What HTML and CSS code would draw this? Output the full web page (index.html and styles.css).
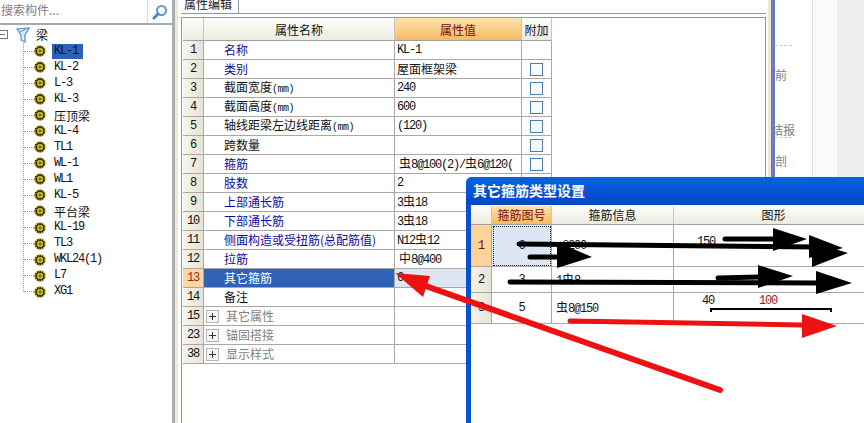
FILE: index.html
```html
<!DOCTYPE html>
<html lang="zh-CN">
<head>
  <meta charset="UTF-8" />
  <title>属性编辑</title>
  <link rel="stylesheet" href="styles.css">
</head>
<body>

<svg class="defs" width="0" height="0">
  <symbol id="gear" viewBox="0 0 12 12">
    <circle cx="6" cy="6" r="5.6" fill="#3d3a10"/>
    <circle cx="6" cy="6" r="5.3" fill="none" stroke="#f2ea4a" stroke-width="1.2" stroke-dasharray="1.4 1.4"/>
    <circle cx="6" cy="6" r="3" fill="#e8de3c"/>
    <path d="M6 3.5 V8.5 M3.5 6 H8.5" stroke="#55510f" stroke-width="1"/>
  </symbol>
</svg>

<div class="app">
  <!-- left: component tree -->
  <div class="side">
    <div class="search">
      <div class="search-box">搜索构件...</div>
      <div class="search-btn">
        <svg width="16" height="16" viewBox="0 0 16 16">
          <circle cx="9.5" cy="6.5" r="4.5" fill="#fff" stroke="#5b9bd0" stroke-width="2"/>
          <path d="M6 10 L2 14" stroke="#4a86bd" stroke-width="3" stroke-linecap="round"/>
        </svg>
      </div>
    </div>
    <div class="tree-root">
      <span class="minus"></span>
      <svg class="funnel" width="14" height="16" viewBox="0 0 14 16">
        <path d="M1 2 L13 1 L9 8 L9 15 L5 13 L5 8 Z" fill="#d6ebf8" stroke="#4f93c9" stroke-width="1.2"/>
        <path d="M4 5 L10 2" stroke="#4f93c9"/>
      </svg>
      <span class="root-name">梁</span>
    </div>
    <ul class="tree">
      <li><i></i><svg class="gear"><use href="#gear"/></svg><span class="node lat selected">KL-1</span></li>
      <li><i></i><svg class="gear"><use href="#gear"/></svg><span class="node lat">KL-2</span></li>
      <li><i></i><svg class="gear"><use href="#gear"/></svg><span class="node lat">L-3</span></li>
      <li><i></i><svg class="gear"><use href="#gear"/></svg><span class="node lat">KL-3</span></li>
      <li><i></i><svg class="gear"><use href="#gear"/></svg><span class="node">压顶梁</span></li>
      <li><i></i><svg class="gear"><use href="#gear"/></svg><span class="node lat">KL-4</span></li>
      <li><i></i><svg class="gear"><use href="#gear"/></svg><span class="node lat">TL1</span></li>
      <li><i></i><svg class="gear"><use href="#gear"/></svg><span class="node lat">WL-1</span></li>
      <li><i></i><svg class="gear"><use href="#gear"/></svg><span class="node lat">WL1</span></li>
      <li><i></i><svg class="gear"><use href="#gear"/></svg><span class="node lat">KL-5</span></li>
      <li><i></i><svg class="gear"><use href="#gear"/></svg><span class="node">平台梁</span></li>
      <li><i></i><svg class="gear"><use href="#gear"/></svg><span class="node lat">KL-19</span></li>
      <li><i></i><svg class="gear"><use href="#gear"/></svg><span class="node lat">TL3</span></li>
      <li><i></i><svg class="gear"><use href="#gear"/></svg><span class="node lat">WKL24(1)</span></li>
      <li><i></i><svg class="gear"><use href="#gear"/></svg><span class="node lat">L7</span></li>
      <li><i></i><svg class="gear"><use href="#gear"/></svg><span class="node lat">XG1</span></li>
    </ul>
  </div>

  <!-- middle: property grid -->
  <div class="main">
    <div class="tabs"><div class="tab">属性编辑</div></div>
    <div class="grid-box">
      <table class="props">
        <colgroup><col class="c-no"><col class="c-name"><col class="c-val"><col class="c-add"></colgroup>
        <tr><th></th><th>属性名称</th><th class="hot">属性值</th><th>附加</th></tr>
        <tr><td class="no">1</td><td class="name blue">名称</td><td class="val lat">KL-1</td><td></td></tr>
        <tr><td class="no">2</td><td class="name blue">类别</td><td class="val">屋面框架梁</td><td class="chk"><span></span></td></tr>
        <tr><td class="no">3</td><td class="name">截面宽度<span class="unit">(mm)</span></td><td class="val lat">240</td><td class="chk"><span></span></td></tr>
        <tr><td class="no">4</td><td class="name">截面高度<span class="unit">(mm)</span></td><td class="val lat">600</td><td class="chk"><span></span></td></tr>
        <tr><td class="no">5</td><td class="name">轴线距梁左边线距离<span class="unit">(mm)</span></td><td class="val lat">(120)</td><td class="chk"><span></span></td></tr>
        <tr><td class="no">6</td><td class="name">跨数量</td><td class="val"></td><td class="chk"><span></span></td></tr>
        <tr><td class="no">7</td><td class="name blue">箍筋</td><td class="val ind">虫<span class="lat">8@100(2)/</span>虫<span class="lat">6@120(</span></td><td class="chk"><span></span></td></tr>
        <tr><td class="no">8</td><td class="name blue">肢数</td><td class="val lat">2</td><td class="chk"><span></span></td></tr>
        <tr><td class="no">9</td><td class="name blue">上部通长筋</td><td class="val"><span class="lat">3</span>虫<span class="lat">18</span></td><td class="chk"><span></span></td></tr>
        <tr><td class="no">10</td><td class="name blue">下部通长筋</td><td class="val"><span class="lat">3</span>虫<span class="lat">18</span></td><td class="chk"><span></span></td></tr>
        <tr><td class="no">11</td><td class="name blue">侧面构造或受扭筋(总配筋值)</td><td class="val"><span class="lat">N12</span>虫<span class="lat">12</span></td><td class="chk"><span></span></td></tr>
        <tr><td class="no">12</td><td class="name blue">拉筋</td><td class="val ind">中<span class="lat">8@400</span></td><td class="chk"><span></span></td></tr>
        <tr class="current"><td class="no">13</td><td class="name">其它箍筋</td><td class="val lat">6</td><td></td></tr>
        <tr><td class="no">14</td><td class="name">备注</td><td class="val"></td><td></td></tr>
        <tr><td class="no">15</td><td class="name group"><span class="plus"></span>其它属性</td><td class="val"></td><td></td></tr>
        <tr><td class="no">23</td><td class="name group"><span class="plus"></span>锚固搭接</td><td class="val"></td><td></td></tr>
        <tr><td class="no">38</td><td class="name group"><span class="plus"></span>显示样式</td><td class="val"></td><td></td></tr>
      </table>
    </div>
  </div>

  <!-- right: page behind the app window -->
  <div class="sash"></div>
  <div class="behind">
    <div class="behind-text">
      <div class="dash"></div>
      <div class="word w1">前</div>
      <div class="word w2">结报</div>
      <div class="dash"></div>
      <div class="word w3">剖</div>
    </div>
    <div class="behind-light"></div>
    <div class="behind-grey"></div>
  </div>
</div>

<!-- dialog floating over the grid -->
<div class="dialog">
  <div class="dialog-title">其它箍筋类型设置</div>
  <div class="dialog-body">
    <table class="stirrups">
      <colgroup><col class="d-no"><col class="d-id"><col class="d-info"><col class="d-shape"></colgroup>
      <tr><th></th><th class="hot">箍筋图号</th><th>箍筋信息</th><th>图形</th></tr>
      <tr class="r1"><td class="no on">1</td><td class="focus lat">6</td><td class="info lat">&nbsp;@200</td>
        <td class="shape"><span class="lat">150</span></td></tr>
      <tr class="r2"><td class="no">2</td><td class="mid lat">3</td><td class="info"><span class="lat">1</span>虫<span class="lat">8</span></td><td></td></tr>
      <tr class="r3"><td class="no">3</td><td class="mid lat">5</td><td class="info">虫<span class="lat">8@150</span></td>
        <td class="shape-cell">
          <div class="dims"><span class="lat">40</span><span class="lat red">100</span></div>
          <div class="bar"></div>
        </td></tr>
    </table>
  </div>
</div>

<!-- hand drawn arrows on top of the screenshot -->
<svg class="marks" width="864" height="423" viewBox="0 0 864 423">
  <g stroke="#000" stroke-width="5" stroke-linecap="round" fill="#000">
    <path d="M519 244 L820 247"/>
    <path d="M809 235 L809 258 L843 248 Z" stroke="none"/>
    <path d="M725 239 L775 239"/>
    <path d="M773 228 L773 251 L807 239 Z" stroke="none"/>
    <path d="M530 257 L557 257"/>
    <path d="M557 242 L557 268 L592 257 Z" stroke="none"/>
    <path d="M812 242 L812 267 L848 253 Z" stroke="none"/>
    <path d="M510 282 L817 283"/>
    <path d="M816 271 L816 294 L852 283 Z" stroke="none"/>
    <path d="M718 278 L759 277"/>
    <path d="M758 265 L758 288 L793 276 Z" stroke="none"/>
  </g>
  <g stroke="#ee1111" stroke-linecap="round" fill="#ee1111">
    <path d="M570 321 L802 325" stroke-width="5"/>
    <path d="M802 314 L802 338 L837 326 Z" stroke="none"/>
    <path d="M720 390 L420 284" stroke-width="6"/>
    <path d="M395 273 L430 276 L423 297 Z" stroke="none"/>
  </g>
</svg>

</body>
</html>
```

FILE: styles.css
```css
html, body {
  margin: 0;
  padding: 0;
  height: 100%;
  overflow: hidden;
  background: #fff;
  color: #111;
  font-family: "Noto Sans CJK SC", "Liberation Sans", sans-serif;
  font-size: 12px;
}
.defs {
  display: block;
  height: 0;
}
.lat {
  font-family: "Liberation Mono", monospace;
  font-size: 12px;
  letter-spacing: -1.2px;
}
.app {
  display: flex;
  height: 423px;
}

/* left tree */
.side {
  width: 172px;
  flex: none;
  border-right: 3px solid #a9adb0;
  box-sizing: content-box;
}
.search {
  display: flex;
  height: 23px;
  border-bottom: 2px solid #a3abb2;
}
.search-box {
  width: 147px;
  border-right: 1px solid #d4d8dc;
  line-height: 20px;
  color: #808080;
  white-space: nowrap;
  overflow: hidden;
  text-indent: 1px;
}
.search-btn {
  flex: 1;
  display: flex;
  align-items: center;
  justify-content: center;
}
.tree-root {
  display: flex;
  align-items: center;
  height: 17px;
  margin-top: 1px;
}
.minus {
  width: 7px;
  height: 7px;
  border: 1px solid #777;
  border-left: none;
  position: relative;
  background: linear-gradient(#777, #777) no-repeat 0 3px / 5px 1px;
}
.funnel {
  margin-left: 8px;
}
.root-name {
  margin-left: 6px;
}
.tree {
  list-style: none;
  margin: 0 0 0 23px;
  padding: 0;
  border-left: 1px dotted #999;
  height: 249px;
}
.tree li {
  display: flex;
  align-items: center;
  height: 16.06px;
  white-space: nowrap;
}
.tree li i {
  width: 10px;
  border-top: 1px dotted #999;
}
.gear {
  width: 12px;
  height: 12px;
  flex: none;
}
.node {
  margin-left: 6px;
  padding: 0 2px;
  line-height: 15px;
}
.node.selected {
  background: #2e62b8;
  width: 27px;
  color: #0a1530;
}

/* middle grid */
.main {
  width: 593px;
  flex: none;
  border-left: 3px solid #ece9d8;
  box-sizing: border-box;
  padding-left: 3px;
}
.tabs {
  height: 13px;
  border-bottom: 1px solid #8f989e;
  margin-right: 2px;
}
.tab {
  width: 54px;
  height: 13px;
  padding-left: 3px;
  line-height: 8px;
  background: #fff;
  border-right: 1px solid #8f989e;
  white-space: nowrap;
  color: #222;
}
.grid-box {
  margin-top: 3px;
  margin-right: 2px;
  height: 420px;
  border: 1px solid #8f989e;
  padding-left: 1px;
}
table {
  border-collapse: separate;
  border-spacing: 0;
  table-layout: fixed;
}
.props {
  width: 369px;
}
.c-no { width: 21px; }
.c-name { width: 191px; }
.c-val { width: 127px; }
.c-add { width: 30px; }
th {
  height: 23px;
  padding: 0;
  font-weight: normal;
  box-sizing: border-box;
  background: linear-gradient(#fdfdfa, #ecebdf);
  border-right: 1px solid #c6c6bc;
  border-bottom: 1px solid #a0a0a0;
}
th.hot {
  color: #7a0a10;
  background: linear-gradient(#fde3b0, #f6bb60);
}
.props td {
  height: 19px;
  padding: 0;
  box-sizing: border-box;
  line-height: 14px;
  white-space: nowrap;
  overflow: hidden;
  border-right: 1px solid #a8a8a8;
  border-bottom: 1px solid #a8a8a8;
}
td.no {
  text-align: center;
  background: linear-gradient(90deg, #f6f5ec, #e6e4d6);
  font-family: "Liberation Mono", monospace;
  font-size: 12px;
  letter-spacing: -1.2px;
}
.name {
  padding-left: 20px !important;
}
.val {
  padding-left: 2px !important;
}
.val.ind {
  padding-left: 4px !important;
}
.unit {
  font-family: "Liberation Mono", monospace;
  font-size: 10px;
  letter-spacing: -0.5px;
}
.blue {
  color: #0a0aa0;
}
.group {
  color: #808080;
  padding-left: 2px !important;
}
.plus {
  display: inline-block;
  width: 11px;
  height: 11px;
  margin-right: 7px;
  vertical-align: -2px;
  border: 1px solid #b5b5b5;
  background:
    linear-gradient(#333, #333) no-repeat center / 7px 1px,
    linear-gradient(#333, #333) no-repeat center / 1px 7px,
    #f4f4f0;
}
.chk span {
  display: block;
  width: 11px;
  height: 11px;
  margin: 0 auto;
  border: 1px solid #4c7ea8;
  background: #f6fafd;
}
.current .no {
  background: #fdd9a0;
  color: #a02020;
}
.current .name {
  background: #2e62b8;
  color: #fff;
}
.current .val {
  background: #dde7f4;
}
.current td:last-child {
  background: #dde7f4;
}

/* right side */
.sash {
  width: 7px;
  flex: none;
  background: linear-gradient(90deg, #ece9d8 0 3px, #6f78c4 3px);
}
.behind {
  flex: 1;
  display: flex;
}
.behind-text {
  width: 37px;
  color: #808080;
  padding-top: 45px;
  box-sizing: border-box;
  overflow: hidden;
  white-space: nowrap;
}
.dash {
  width: 17px;
  border-top: 1px dashed #ccc;
}
.word {
  line-height: 14px;
}
.w1 { margin-top: 22px; }
.w2 { margin-top: 41px; margin-left: -4px; }
.w3 { margin-top: 16px; }
.behind-light {
  width: 24px;
  background: #fafafa;
  border-left: 1px solid #e2e2e2;
}
.behind-grey {
  flex: 1;
  background: #eeeeef;
}

/* dialog */
.dialog {
  position: absolute;
  left: 466px;
  top: 177px;
  width: 420px;
  height: 260px;
  border-radius: 6px 0 0 0;
  overflow: hidden;
  background: #0a50d2;
}
.dialog-title {
  height: 28px;
  line-height: 27px;
  padding-left: 7px;
  color: #fff;
  font-size: 14px;
  font-weight: bold;
  background: linear-gradient(#0a62e0, #0450d0 60%, #0648c4);
}
.dialog-body {
  margin-left: 5px;
  height: 232px;
  padding-top: 1px;
  background: #fff;
}
.stirrups {
  width: 403px;
}
.d-no { width: 21px; }
.d-id { width: 60px; }
.d-info { width: 122px; }
.d-shape { width: 200px; }
.stirrups th {
  height: 19px;
  line-height: 14px;
}
.stirrups td {
  padding: 0;
  box-sizing: border-box;
  white-space: nowrap;
  line-height: 14px;
  border-right: 1px solid #a8a8a8;
  border-bottom: 1px solid #a8a8a8;
}
.r1 td { height: 42px; }
.r2 td { height: 26px; }
.r3 td { height: 31px; }
td.no.on {
  background: #fdd39a;
  color: #7a0a10;
}
.focus {
  background: #dde7f4;
  text-align: center;
  outline: 1px dotted #222;
  outline-offset: -2px;
}
.mid {
  text-align: center;
}
.info {
  padding-left: 4px !important;
}
.stirrups .shape {
  padding: 8px 0 0 23px;
  vertical-align: top;
}
.stirrups .shape-cell {
  padding-left: 28px;
  vertical-align: top;
}
.dims {
  display: flex;
  gap: 45px;
  line-height: 14px;
  padding-top: 1px;
}
.red {
  color: #a01818;
}
.bar {
  width: 122px;
  height: 4px;
  margin: 0 0 0 8px;
  border: 2px solid #000;
  border-bottom: none;
  box-sizing: border-box;
}

.marks {
  position: absolute;
  left: 0;
  top: 0;
  pointer-events: none;
}
```
